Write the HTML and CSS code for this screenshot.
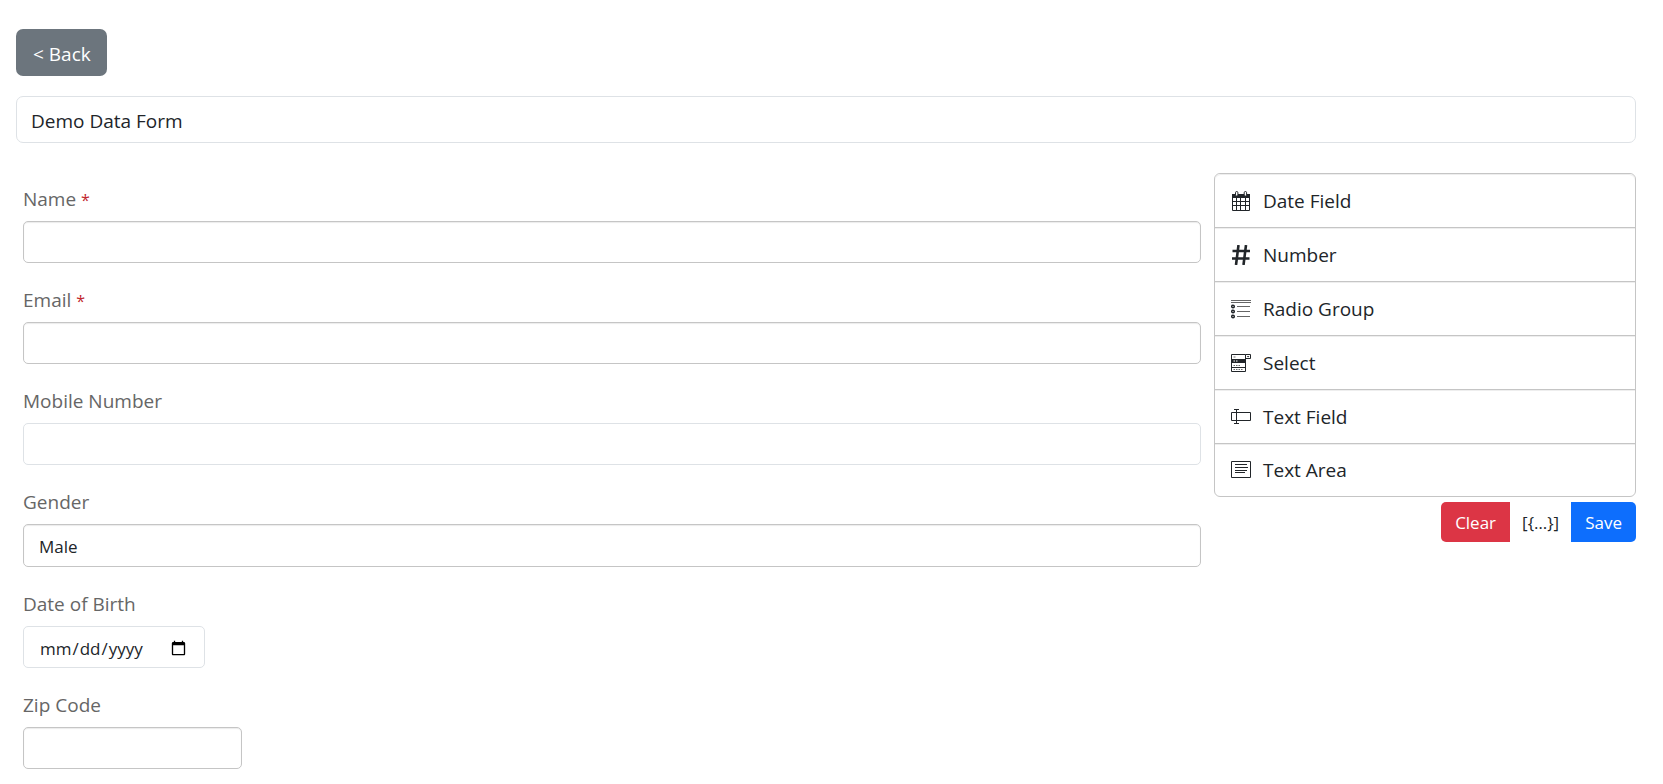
FILE: index.html
```html
<!DOCTYPE html>
<html lang="en">
<head>
<meta charset="utf-8">
<title>Demo Data Form</title>
<link rel="stylesheet" href="styles.css">
</head>
<body>
<main class="page">
  <button class="back" type="button">&lt; Back</button>
  <input class="form-title" type="text" aria-label="Form name" value="Demo Data Form">
  <div class="builder">
    <form class="fields" id="form">
      <div class="field"><label for="name">Name <span class="required">*</span></label><input class="control" id="name" type="text"></div>
      <div class="field"><label for="email">Email <span class="required">*</span></label><input class="control" id="email" type="email"></div>
      <div class="field"><label for="mobile">Mobile Number</label><input class="control plain" id="mobile" type="text"></div>
      <div class="field"><label for="gender">Gender</label><select class="control" id="gender"><option>Male</option><option>Female</option></select></div>
      <div class="field"><label for="dob">Date of Birth</label><input class="control plain date" id="dob" type="date"></div>
      <div class="field"><label for="zip">Zip Code</label><input class="control number" id="zip" type="text" inputmode="numeric"></div>
    </form>
    <aside class="side">
      <ul class="palette">
        <li><svg class="icon" viewBox="0 0 20 20"><path d="M1 3h18v16a1 1 0 0 1-1 1H2a1 1 0 0 1-1-1z" fill="#212529"/><path d="M2 7h3v3H2zM6 7h3v3H6zM10 7h4v3h-4zM15 7h3v3h-3zM2 11h3v3H2zM6 11h3v3H6zM10 11h4v3h-4zM15 11h3v3h-3zM2 15h3v4H2zM6 15h3v4H6zM10 15h4v4h-4zM15 15h3v4h-3z" fill="#fff"/><rect x="4.5" y=".5" width="2.4" height="4.6" rx="1.2" fill="#fff" stroke="#212529"/><rect x="13.2" y=".5" width="2.4" height="4.6" rx="1.2" fill="#fff" stroke="#212529"/></svg>Date Field</li>
        <li><svg class="icon" viewBox="0 0 20 20"><path d="M7.5 0 5 20M15 0l-2.500 20M1.500 6h17.500M1 13.500h17.500" fill="none" stroke="#212529" stroke-width="2.6"/></svg>Number</li>
        <li><svg class="icon" viewBox="0 0 20 20"><path d="M0 1.5h20M0 3.5h20M6 7.5h13M6 12.5h13M6 17.5h13" fill="none" stroke="#666"/><g fill="#fff" stroke="#212529" stroke-width="1.5"><circle cx="2" cy="7.5" r="1.3"/><circle cx="2" cy="12.5" r="1.3"/><circle cx="2" cy="17.5" r="1.3"/></g></svg>Radio Group</li>
        <li><svg class="icon" viewBox="0 0 20 20"><path d="M.5 1.5h14v17H.5zM14.5 1.5h5v4h-5M.5 9.5h14M.5 14.5h14" fill="none" stroke="#212529"/><path d="M0 6h15v4H0z" fill="#212529"/><path d="m15.8 3 1.3 1.6L18.4 3z" fill="#212529"/><path d="M2.5 4h2" stroke="#777"/><path d="M2.5 8h5" stroke="#fff" stroke-dasharray="1.5 1"/><path d="M2.5 12.5h7M2.5 16.5h9" stroke="#666" stroke-dasharray="1.5 1"/></svg>Select</li>
        <li><svg class="icon" viewBox="0 0 20 20"><path d="M.5 5.5h19v8H.5zM5.5 3v13M3 2.5h5M3 16.5h5" fill="none" stroke="#212529"/></svg>Text Field</li>
        <li><svg class="icon" viewBox="0 0 20 20"><path d="M.5 1.5h19v16H.5zM4 4.5h12M4 7.5h13M4 10.5h12M4 12.5h10" fill="none" stroke="#212529"/></svg>Text Area</li>
      </ul>
      <div class="actions">
        <button class="action clear" type="reset" form="form">Clear</button>
        <button class="action json" type="button">[{…}]</button>
        <button class="action save" type="submit" form="form">Save</button>
      </div>
    </aside>
  </div>
</main>
</body>
</html>
```
FILE: styles.css
```css
* { box-sizing: border-box; }

body {
  margin: 0;
  background: #fff;
  color: #212529;
  font-family: "Segoe UI", "Open Sans", "Noto Sans", sans-serif;
  font-size: 19px;
  line-height: 27px;
}

button, input, select { font: inherit; color: inherit; }

.page { padding: 29px 27px 14px 16px; }

.back {
  display: block;
  height: 47px;
  margin-bottom: 20px;
  padding: 3px 16px 0 17px;
  border: 0;
  border-radius: 7px;
  background: #6c757d;
  color: #fff;
}

.form-title {
  display: block;
  width: 100%;
  height: 47px;
  padding: 2px 14px 0;
  border: 1px solid #dee2e6;
  border-radius: 7px;
  background: #fff;
}

.builder {
  display: flex;
  gap: 13px;
  margin-top: 30px;
}

.fields {
  flex: 1;
  min-width: 0;
  padding: 13px 0 0 7px;
}

.field { margin-bottom: 24px; }
.field:last-child { margin-bottom: 0; }

.field label {
  display: block;
  margin-bottom: 8px;
  color: #666;
}

.required { color: #c1272d; font-size: 16px; line-height: 1; }

.control {
  display: block;
  width: 100%;
  height: 42px;
  padding: 2px 15px 0;
  border: 1px solid #c5c5c5;
  border-radius: 5px;
  background: #fff;
  box-shadow: inset 0 1px 1px rgba(0, 0, 0, .08);
  font-size: 17px;
  appearance: none;
}

select.control { height: 43px; }

.plain { border-color: #dee2e6; box-shadow: none; }
.date { width: 182px; }
.number { width: 219px; }

.side { flex: 0 0 422px; }

.palette {
  margin: 0;
  padding: 0;
  list-style: none;
  border: 1px solid #c5c5c5;
  border-radius: 6px;
}

.palette li {
  display: flex;
  align-items: center;
  gap: 12px;
  height: 54px;
  padding: 1px 16px 0;
  border-bottom: 1px solid #c5c5c5;
  box-shadow: inset 0 1px #eee;
  cursor: move;
}

.palette li:first-child { border-radius: 6px 6px 0 0; }
.palette li:last-child { height: 52px; padding-top: 0; border-bottom: 0; }

.icon { width: 20px; height: 20px; flex: none; }

.actions {
  display: flex;
  justify-content: flex-end;
  margin-top: 5px;
}

.action {
  height: 40px;
  padding: 1px 14px 0;
  border: 0;
  font-size: 17px;
  color: #fff;
}

.clear { border-radius: 5px 0 0 5px; background: #dc3545; }
.json { padding: 1px 12px 0; background: #fff; color: #212529; }
.save { border-radius: 0 5px 5px 0; background: #0d6efd; }
```
